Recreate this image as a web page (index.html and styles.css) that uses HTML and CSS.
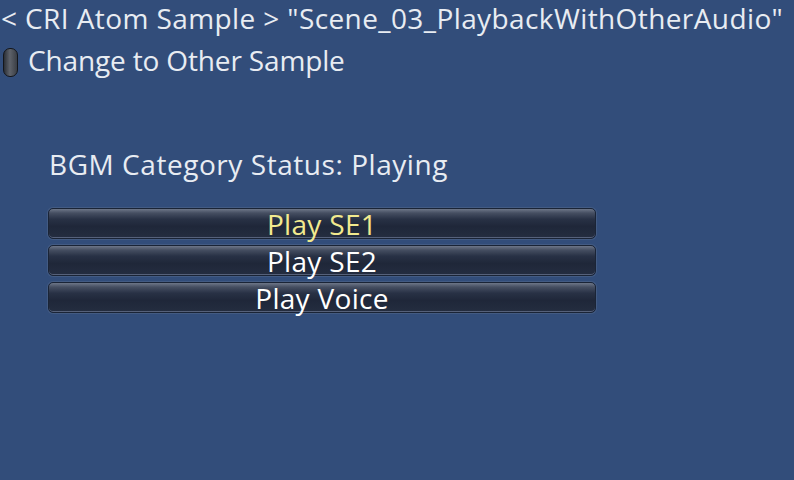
FILE: index.html
```html
<!DOCTYPE html>
<html>
<head>
<meta charset="utf-8">
<link rel="stylesheet" href="styles.css">
</head>
<body>
<div class="screen">
  <div class="title">&lt; CRI Atom Sample &gt; "Scene_03_PlaybackWithOtherAudio"</div>
  <div class="toggle-row">
    <span class="toggle"></span>
    <span class="toggle-label">Change to Other Sample</span>
  </div>
  <div class="panel">
    <div class="status">BGM Category Status: Playing</div>
    <div class="buttons">
      <div class="btn active">Play SE1</div>
      <div class="btn">Play SE2</div>
      <div class="btn">Play Voice</div>
    </div>
  </div>
</div>
</body>
</html>
```

FILE: styles.css
```css
html, body {
  margin: 0;
  padding: 0;
  background: #324d7a;
}
.screen {
  width: 794px;
  height: 480px;
  overflow: hidden;
  font-family: "Open Sans", "Noto Sans", sans-serif;
  font-size: 28px;
  letter-spacing: 0.3px;
  color: #e8ecf2;
}
.title {
  line-height: 36px;
  white-space: nowrap;
  padding-left: 1px;
  letter-spacing: 0.4px;
}
.toggle-row {
  display: flex;
  align-items: flex-start;
  height: 44px;
  margin-top: 2px;
}
.toggle {
  width: 15px;
  height: 29px;
  margin-top: 10px;
  margin-left: 3px;
  margin-right: 10px;
  border-radius: 7px;
  background: linear-gradient(to right, #2b2f36, #5e626a 45%, #3a3e45);
  border: 1px solid #14161b;
  box-sizing: border-box;
}
.toggle-label {
  line-height: 44px;
  letter-spacing: -0.15px;
}
.panel {
  padding-left: 48px;
  padding-top: 64px;
}
.status {
  line-height: 36px;
  padding-left: 1px;
  letter-spacing: 0.55px;
}
.buttons {
  margin-top: 26px;
  width: 548px;
  display: flex;
  flex-direction: column;
  gap: 6px;
}
.btn {
  height: 31px;
  box-sizing: border-box;
  border-radius: 5px;
  border: 1px solid #1a2436;
  background: linear-gradient(to bottom, #6d7688 0%, #454e61 14%, #283145 35%, #1f2739 60%, #242d40 100%);
  box-shadow: inset 0 -1px 0 #56617a, 0 0 0 1px rgba(120,135,160,0.25);
  text-align: center;
  line-height: 30px;
  color: #ffffff;
}
.btn.active {
  color: #f2ea8e;
}
```
